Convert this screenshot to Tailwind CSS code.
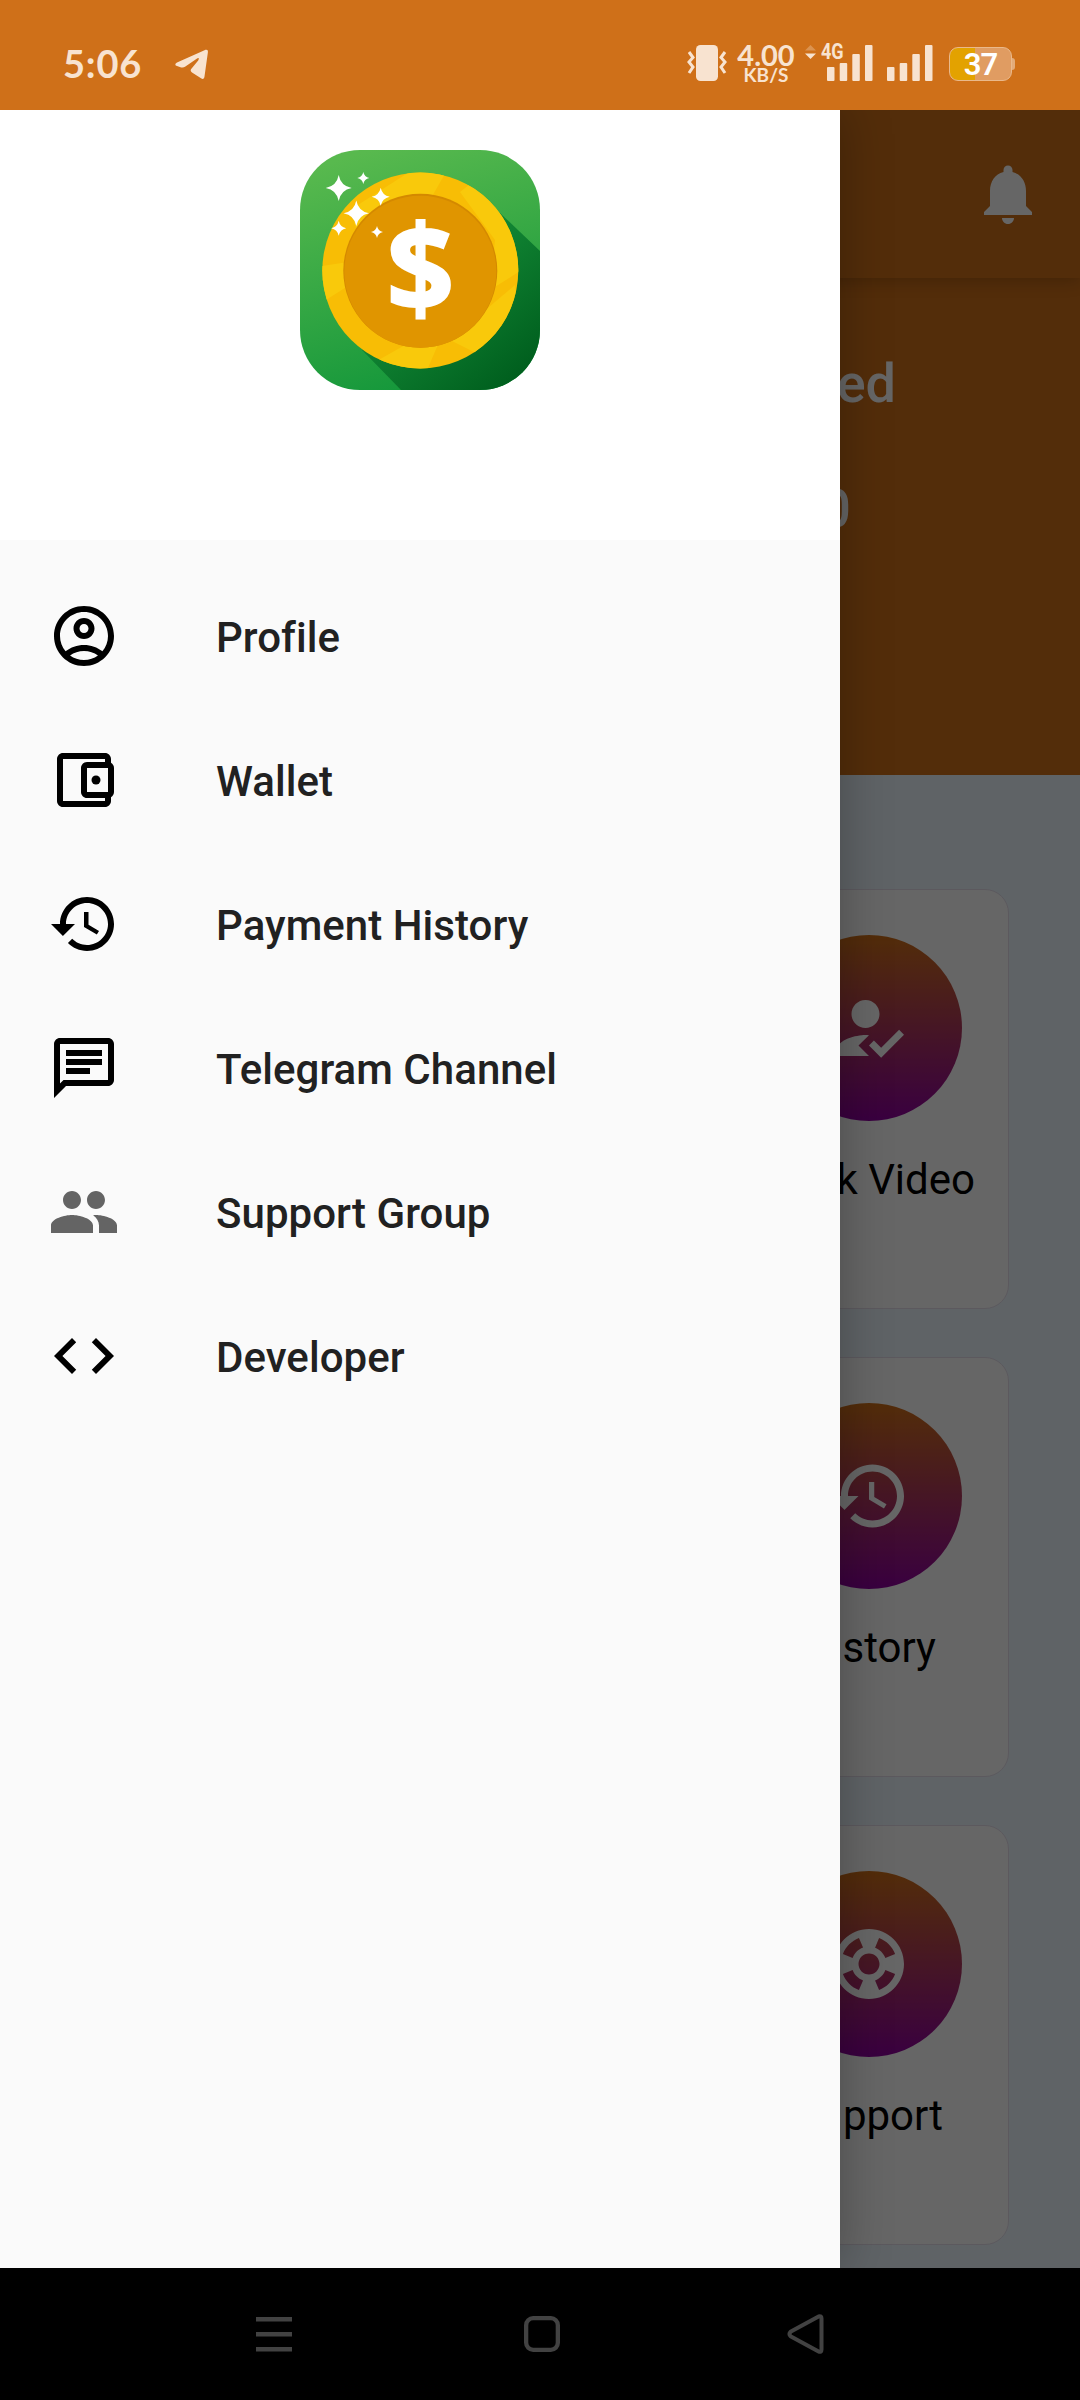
<!DOCTYPE html>
<html lang="en">
<head>
<meta charset="utf-8">
<title>Rewards</title>
<script src="https://cdn.jsdelivr.net/npm/@tailwindcss/browser@4"></script>
</head>
<body class="w-[1080px] h-[2400px] overflow-hidden bg-black font-['Roboto',sans-serif]">
<div class="flex flex-col w-[1080px] h-[2400px]">

  <!-- Status bar -->
  <header class="flex h-[110px] shrink-0 items-start justify-between bg-[#cf7019] pt-[44px] pl-[63px] pr-[65px] text-[#f8e3d0]">
    <div class="flex items-start">
      <span class="w-[111px] font-['Lato',sans-serif] text-[38px] leading-[38px] font-bold tracking-[.8px]">5:06</span>
      <svg class="mt-[5px] h-[31px] w-[35px]" viewBox="0 0 35 31" fill="currentColor"><path d="M3 13.400 30.500 1.200C32.600.3 34.200.6 33.900 3.200L30.500 27.500C30.200 29.800 29 30.500 27 29.300L18 23.500C16.300 22.300 16.300 21 17.600 19.600L24.200 11.400C25.600 9.400 24.700 8.400 22.700 9.700L11.400 17.500C10 18.500 8.700 18.800 7.200 18.400L3 17.100C.8 16.300.7 14.600 3 13.400Z"/></svg>
    </div>
    <div class="flex items-start">
      <svg class="mt-[1px] h-[36px] w-[40px]" viewBox="0 0 40 36" fill="none" stroke="currentColor" stroke-width="3"><rect x="9" width="22" height="36" rx="4.500" fill="currentColor" stroke="none"/><path d="M2 7l4 5.500-4 4.500 4 5-4 6M38 7l-4 5.500 4 4.500-4 5 4 6"/></svg>
      <div class="ml-[9px] flex w-[60px] flex-col items-center font-['Lato',sans-serif] font-bold">
        <span class="text-[29px] leading-[22px]">4.00</span>
        <span class="text-[19px] leading-[18px]">KB/S</span>
      </div>
      <svg class="ml-[9px] mt-[1px] h-[14px] w-[11px]" viewBox="0 0 11 14" fill="currentColor"><path opacity=".3" d="M5.500 0 11 5.500H0z"/><path d="M5.500 14 0 8.500H11z"/></svg>
      <div class="relative ml-[10px] h-[38px] w-[47px]">
        <svg class="absolute left-0 top-0 h-[38px] w-[47px]" viewBox="0 0 47 38" fill="currentColor"><rect x="1" y="23" width="7.500" height="14" rx="1"/><rect x="13.700" y="19" width="7.500" height="18" rx="1"/><rect x="26.300" y="10" width="7.500" height="27" rx="1"/><rect x="39" y="1" width="7.500" height="36" rx="1"/></svg>
        <span class="absolute -left-[5px] -top-[1px] origin-left scale-x-[.82] text-[22px] leading-[18px] font-bold">4G</span>
      </div>
      <svg class="ml-[14px] h-[38px] w-[47px]" viewBox="0 0 47 38" fill="currentColor"><rect x="0" y="23" width="7.500" height="14" rx="1"/><rect x="12.700" y="19" width="7.500" height="18" rx="1"/><rect x="25.300" y="10" width="7.500" height="27" rx="1"/><rect x="38" y="1" width="7.500" height="36" rx="1"/></svg>
      <div class="ml-[15px] mt-[3px] flex items-center">
        <div class="flex h-[34px] w-[63px] items-center justify-center rounded-[9px] border border-[#eab98b] bg-[linear-gradient(90deg,#e3a200_0_25px,#e09c62_25px)] font-['Roboto',sans-serif] text-[31px] leading-none font-semibold text-white"><span class="tracking-[-1px]">37</span></div>
        <div class="h-[12px] w-[3px] rounded-r-[3px] bg-[#e3ab79]"></div>
      </div>
    </div>
  </header>

  <main class="relative h-[2158px] shrink-0 overflow-hidden bg-[#edf8ff]">
    <!-- Home screen -->
    <div class="flex flex-col">
      <div class="relative z-10 flex h-[168px] items-center justify-end bg-[#cf7019] pr-[36px] shadow-[0_3px_16px_rgba(0,0,0,.2)]">
        <svg class="size-[72px] text-white" viewBox="0 0 24 24" fill="currentColor"><path d="M12 22c1.100 0 2-.9 2-2h-4c0 1.100.89 2 2 2zm6-6v-5c0-3.070-1.640-5.640-4.500-6.320V4c0-.83-.67-1.500-1.500-1.500s-1.500.67-1.500 1.500v.68C7.630 5.360 6 7.920 6 11v5l-2 2v1h16v-1l-2-2z"/></svg>
      </div>
      <div class="flex h-[497px] flex-col items-end bg-[#cf7019] pt-[74px] text-[54px] leading-[64px] font-medium text-white">
        <span class="pr-[184px]">ed</span>
        <span class="mt-[61px] pr-[229px]">0</span>
      </div>
      <div class="flex flex-col items-end gap-[48px] pt-[114px] pr-[71px] text-[42px] leading-[50px] text-black">
        <section class="flex h-[420px] w-[281px] flex-col items-center rounded-[24px] border border-[#e6dfec] bg-white pt-[45px]">
          <div class="flex size-[186px] items-center justify-center rounded-full bg-[linear-gradient(180deg,#cf7019,#8f00a0)]">
            <svg class="size-[84px] text-white" viewBox="0 0 24 24" fill="currentColor"><path d="M9 17l3-2.940c-.39-.04-.68-.06-1-.06-2.670 0-8 1.340-8 4v2h9l-3-3zM11 12c2.210 0 4-1.790 4-4s-1.790-4-4-4-4 1.790-4 4 1.790 4 4 4zM15.470 20.500 12 17l1.400-1.410 2.070 2.080 5.130-5.170 1.400 1.410z"/></svg>
          </div>
          <span class="mt-[34px] self-end pr-[33px]">k Video</span>
        </section>
        <section class="flex h-[420px] w-[281px] flex-col items-center rounded-[24px] border border-[#e6dfec] bg-white pt-[45px]">
          <div class="flex size-[186px] items-center justify-center rounded-full bg-[linear-gradient(180deg,#cf7019,#8f00a0)]">
            <svg class="size-[84px] text-white" viewBox="0 0 24 24" fill="currentColor"><path d="M13 3c-4.970 0-9 4.030-9 9H1l3.890 3.890.07.14L9 12H6c0-3.870 3.130-7 7-7s7 3.130 7 7-3.130 7-7 7c-1.930 0-3.680-.79-4.940-2.060l-1.420 1.420C8.270 19.990 10.510 21 13 21c4.970 0 9-4.030 9-9s-4.030-9-9-9zm-1 5v5l4.280 2.540.72-1.210-3.500-2.080V8H12z"/></svg>
          </div>
          <span class="mt-[34px] self-end pr-[72px]">story</span>
        </section>
        <section class="flex h-[420px] w-[281px] flex-col items-center rounded-[24px] border border-[#e6dfec] bg-white pt-[45px]">
          <div class="flex size-[186px] items-center justify-center rounded-full bg-[linear-gradient(180deg,#cf7019,#8f00a0)]">
            <svg class="size-[84px] text-white" viewBox="0 0 24 24" fill="currentColor"><path fill-rule="evenodd" d="M12 2C6.480 2 2 6.480 2 12s4.480 10 10 10 10-4.480 10-10S17.520 2 12 2zm7.460 7.120-2.780 1.150c-.51-1.360-1.580-2.440-2.950-2.940l1.150-2.780c2.100.8 3.770 2.470 4.580 4.570zM12 15c-1.660 0-3-1.340-3-3s1.340-3 3-3 3 1.340 3 3-1.340 3-3 3zM9.130 4.540l1.170 2.780c-1.380.5-2.470 1.590-2.980 2.970L4.540 9.130c.81-2.110 2.480-3.780 4.590-4.590zM4.540 14.870l2.780-1.150c.51 1.380 1.590 2.460 2.970 2.960l-1.170 2.780c-2.100-.81-3.770-2.480-4.580-4.590zM14.880 19.460l-1.150-2.780c1.370-.51 2.450-1.590 2.950-2.970l2.780 1.170c-.81 2.100-2.480 3.770-4.580 4.580z"/></svg>
          </div>
          <span class="mt-[34px] self-end pr-[65px]">pport</span>
        </section>
      </div>
    </div>

    <!-- Scrim -->
    <div class="absolute inset-0 z-20 bg-black/60"></div>

    <!-- Navigation drawer -->
    <aside class="absolute inset-y-0 left-0 z-30 flex w-[840px] flex-col bg-[#fafafa] shadow-[0_0_48px_rgba(0,0,0,.28)]">
      <div class="flex h-[430px] shrink-0 justify-center bg-white pt-[40px]">
        <svg class="size-[240px] rounded-[60px]" viewBox="0 0 240 240">
          <defs>
            <linearGradient id="leaf" x1=".3" y1="0" x2=".6" y2="1"><stop offset="0" stop-color="#58b94e"/><stop offset="1" stop-color="#12963a"/></linearGradient>
            <linearGradient id="shade" x1=".3" y1=".2" x2=".9" y2=".9"><stop offset="0" stop-color="#16903a"/><stop offset="1" stop-color="#005f1e"/></linearGradient>
            <clipPath id="rim"><circle cx="120.300" cy="120.500" r="98"/></clipPath>
          </defs>
          <rect width="240" height="240" fill="url(#leaf)"/>
          <path d="M200 63 240 101V240H101L62 200Z" fill="url(#shade)"/>
          <circle cx="120.300" cy="120.500" r="98" fill="#f8bd05"/>
          <g clip-path="url(#rim)" fill="#f9c90b">
            <path d="M10 118 48 112V136L10 160ZM50 60 128 10 150 15 130 50 60 90ZM160 42 175 30 225 80V118L190 140 195 90ZM75 212 105 195 140 190 125 225 80 225ZM150 190 215 135 218 160 180 205Z"/>
          </g>
          <circle cx="120.300" cy="120.700" r="77" fill="#d48900"/>
          <circle cx="120.300" cy="121.700" r="76" fill="#e09500"/>
          <text x="120.500" y="162" text-anchor="middle" textLength="68" lengthAdjust="spacingAndGlyphs" font-family="Open Sans" font-weight="700" font-size="121" fill="#fff" stroke="#fff" stroke-width="2">$</text>
          <g fill="#fff">
            <path d="M38.700 25Q40.700 36 51.700 38 40.700 40 38.700 51 36.700 40 25.700 38 36.700 36 38.700 25Z"/>
            <path d="M63.300 22Q64.300 27 69.300 28 64.300 29 63.300 34 62.300 29 57.300 28 62.300 27 63.300 22Z"/>
            <path d="M80.700 37.700Q82.200 45.200 89.700 46.700 82.200 48.200 80.700 55.700 79.200 48.200 71.700 46.700 79.200 45.200 80.700 37.700Z"/>
            <path d="M56.300 50.500Q58.300 61.300 69 63.300 58.300 65.300 56.300 76 54.300 65.300 43.500 63.300 54.300 61.300 56.300 50.500Z"/>
            <path d="M38.700 70.800Q40 77 46.200 78.300 40 79.600 38.700 85.800 37.400 79.600 31.200 78.300 37.400 77 38.700 70.800Z"/>
            <path d="M77 76Q78 81 83 82 78 83 77 88 76 83 71 82 76 81 77 76Z"/>
          </g>
        </svg>
      </div>
      <nav class="flex flex-col pt-[24px] text-[42px] leading-[50px] font-medium tracking-[.05px] text-[#212121]">
        <a class="flex h-[144px] items-center gap-24 pl-[48px]"><svg class="size-[72px] text-black" viewBox="0 0 24 24" fill="currentColor"><path d="M12 2C6.480 2 2 6.480 2 12s4.480 10 10 10 10-4.480 10-10S17.520 2 12 2zM7.350 18.500C8.660 17.560 10.260 17 12 17s3.340.56 4.650 1.500C15.340 19.440 13.740 20 12 20s-3.340-.56-4.650-1.500zm10.790-1.380C16.450 15.800 14.320 15 12 15s-4.450.8-6.140 2.120C4.700 15.730 4 13.950 4 12c0-4.420 3.580-8 8-8s8 3.580 8 8c0 1.950-.7 3.730-1.860 5.120zM12 6c-1.930 0-3.500 1.570-3.500 3.500S10.070 13 12 13s3.500-1.570 3.500-3.500S13.930 6 12 6zm0 5c-.83 0-1.500-.67-1.500-1.500S11.170 8 12 8s1.500.67 1.500 1.500S12.830 11 12 11z"/></svg><span class="pt-[3px]">Profile</span></a>
        <a class="flex h-[144px] items-center gap-24 pl-[48px]"><svg class="size-[72px] text-black" viewBox="0 0 24 24" fill="currentColor"><path fill-rule="evenodd" d="M5 3h14c1.100 0 2 .9 2 2v1.270c.6.340 1 .99 1 1.730v8c0 .74-.4 1.390-1 1.730V19c0 1.100-.9 2-2 2H5c-1.100 0-2-.9-2-2V5c0-1.100.9-2 2-2zm0 2v14h14v-1h-6c-1.100 0-2-.9-2-2V8c0-1.100.9-2 2-2h6V5H5zm8 3v8h7V8h-7z"/><circle cx="16" cy="12" r="1.500"/></svg><span class="pt-[3px]">Wallet</span></a>
        <a class="flex h-[144px] items-center gap-24 pl-[48px]"><svg class="size-[72px] text-black" viewBox="0 0 24 24" fill="currentColor"><path d="M13 3c-4.970 0-9 4.030-9 9H1l3.890 3.890.07.14L9 12H6c0-3.870 3.130-7 7-7s7 3.130 7 7-3.130 7-7 7c-1.930 0-3.680-.79-4.940-2.060l-1.420 1.420C8.270 19.990 10.510 21 13 21c4.970 0 9-4.030 9-9s-4.030-9-9-9zm-1 5v5l4.280 2.540.72-1.210-3.500-2.080V8H12z"/></svg><span class="pt-[3px]">Payment History</span></a>
        <a class="flex h-[144px] items-center gap-24 pl-[48px]"><svg class="size-[72px] text-black" viewBox="0 0 24 24" fill="currentColor"><path d="M4 4h16v12H5.170L4 17.170V4m0-2c-1.100 0-1.990.9-1.990 2L2 22l4-4h14c1.100 0 2-.9 2-2V4c0-1.100-.9-2-2-2H4zm2 10h8v2H6v-2zm0-3h12v2H6V9zm0-3h12v2H6V6z"/></svg><span class="pt-[3px]">Telegram Channel</span></a>
        <a class="flex h-[144px] items-center gap-24 pl-[48px]"><svg class="size-[72px] text-[#646464]" viewBox="0 0 24 24" fill="currentColor"><path d="M16 11c1.660 0 2.990-1.340 2.990-3S17.660 5 16 5s-3 1.340-3 3 1.340 3 3 3zm-8 0c1.660 0 2.990-1.340 2.990-3S9.660 5 8 5 5 6.340 5 8s1.340 3 3 3zm0 2c-2.330 0-7 1.170-7 3.500V19h14v-2.500c0-2.330-4.670-3.500-7-3.500zm8 0c-.29 0-.62.02-.97.05 1.160.84 1.970 1.970 1.970 3.450V19h6v-2.500c0-2.330-4.670-3.500-7-3.500z"/></svg><span class="pt-[3px]">Support Group</span></a>
        <a class="flex h-[144px] items-center gap-24 pl-[48px]"><svg class="size-[72px] text-black" viewBox="0 0 24 24" fill="currentColor"><path d="M9.400 16.600 4.800 12l4.600-4.600L8 6l-6 6 6 6 1.400-1.400zm5.200 0 4.600-4.600-4.600-4.600L16 6l6 6-6 6-1.400-1.400z"/></svg><span class="pt-[3px]">Developer</span></a>
      </nav>
    </aside>
  </main>

  <!-- System navigation -->
  <footer class="grid h-[132px] shrink-0 grid-cols-[268px_232px_268px] items-center bg-black pl-[256px] text-[#424242]">
    <svg class="h-[36px] w-[36px]" viewBox="0 0 36 36" fill="currentColor"><path d="M0 1h36v4.500H0zM0 16h36v4.500H0zM0 31h36v4.500H0z"/></svg>
    <svg class="h-[36px] w-[36px]" viewBox="0 0 36 36" fill="none" stroke="currentColor" stroke-width="4.300"><rect x="2.150" y="2.150" width="31.700" height="31.700" rx="7"/></svg>
    <svg class="ml-[31px] h-[40px] w-[38px]" viewBox="0 0 38 40" fill="none" stroke="currentColor" stroke-width="4" stroke-linejoin="round"><path d="M3.500 17.800 31.600 2.400Q34.500 1.500 34.500 4.500V35.500Q34.500 38.500 31.600 37.600L3.500 22.200Q1.500 20 3.500 17.800Z"/></svg>
  </footer>
</div>
</body>
</html>
